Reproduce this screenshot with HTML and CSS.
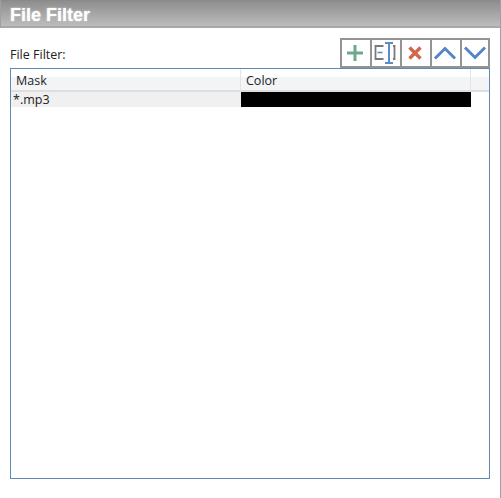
FILE: index.html
```html
<!DOCTYPE html>
<html lang="en">
<head>
    <meta charset="UTF-8">
    <title>File Filter</title>
    <link rel="stylesheet" href="styles.css">
</head>
<body>
    <div class="window">
        <h1 class="title">File Filter</h1>
        <div class="content">
            <div class="toolbar-row">
                <span class="filter-label">File Filter:</span>
                <div class="toolbar">
                    <button class="tool-btn" title="Add">
                        <svg width="20" height="20" viewBox="0 0 20 20"><path d="M10 2v16M2 10h16" stroke="#6fa68e" stroke-width="3" fill="none"/></svg>
                    </button>
                    <button class="tool-btn" title="Rename">
                        <svg width="26" height="26" viewBox="0 0 26 26">
                            <path d="M11.5 6H3.5v13h8M21 6h1.5v13H21" stroke="#7a7a7a" stroke-width="1.8" fill="none"/>
                            <path d="M5.5 12.5h5" stroke="#5b8bc9" stroke-width="1.6" fill="none"/>
                            <path d="M13 3h8M17 3v20M13 23h8" stroke="#5b8bc9" stroke-width="2" fill="none"/>
                        </svg>
                    </button>
                    <button class="tool-btn" title="Delete">
                        <svg width="20" height="20" viewBox="0 0 20 20"><path d="M4.5 4.5l11 11M15.5 4.5l-11 11" stroke="#d4674a" stroke-width="3.4" fill="none"/></svg>
                    </button>
                    <button class="tool-btn" title="Move up">
                        <svg width="24" height="20" viewBox="0 0 24 20"><path d="M2 15.5l10-10 10 10" stroke="#5585c9" stroke-width="3" fill="none"/></svg>
                    </button>
                    <button class="tool-btn" title="Move down">
                        <svg width="24" height="20" viewBox="0 0 24 20"><path d="M2 4.5l10 10 10-10" stroke="#5585c9" stroke-width="3" fill="none"/></svg>
                    </button>
                </div>
            </div>
            <div class="grid">
                <div class="grid-head">
                    <div class="head-cell">Mask</div>
                    <div class="head-cell">Color</div>
                    <div class="head-cell"></div>
                </div>
                <div class="grid-row">
                    <div class="mask-cell">*.mp3</div>
                    <div class="color-cell"></div>
                </div>
            </div>
        </div>
    </div>
</body>
</html>
```

FILE: styles.css
```css
html, body {
    margin: 0;
    padding: 0;
}

body {
    width: 501px;
    height: 498px;
    overflow: hidden;
    background-color: white;
    font-family: "Open Sans", Arial, sans-serif;
    font-size: 12.5px;
    color: #222;
}

.window {
    box-sizing: border-box;
    width: 501px;
    height: 498px;
    border-right: 1px solid #a0a0a0;
}

.title {
    box-sizing: border-box;
    height: 28px;
    margin: 0;
    padding-left: 9px;
    background: linear-gradient(#8e8e8e, #bcbcbc);
    border-top: 1px solid #8a8a8a;
    border-left: 1px solid #a0a0a0;
    border-bottom: 2px solid #a8a8a8;
    font-family: "Liberation Sans", Arial, sans-serif;
    font-size: 18px;
    line-height: 28px;
    font-weight: bold;
    color: white;
    text-shadow: 0 0 2px rgba(255, 255, 255, 0.7);
}

.content {
    padding: 10px 10px 0 10px;
}

.toolbar-row {
    display: flex;
    justify-content: space-between;
    align-items: center;
    height: 30px;
}

.filter-label {
    padding-top: 2px;
}

.toolbar {
    display: flex;
}

.tool-btn {
    display: flex;
    align-items: center;
    justify-content: center;
    box-sizing: border-box;
    width: 32px;
    height: 30px;
    margin: 0 -2px 0 0;
    padding: 0 2px 0 0;
    background-color: white;
    border: 2px solid #949494;
}

.tool-btn:last-child {
    width: 30px;
    margin-right: 0;
    padding-right: 0;
}

.grid {
    box-sizing: border-box;
    width: 480px;
    height: 411px;
    border: 1px solid #5f8ab5;
}

.grid-head {
    display: grid;
    grid-template-columns: 230px 230px 1fr;
    height: 23px;
    box-sizing: border-box;
    background: linear-gradient(white 40%, #f3f4f6 40%);
    border-bottom: 2px solid #dedede;
}

.head-cell {
    box-sizing: border-box;
    padding-left: 5px;
    line-height: 23px;
    border-right: 1px solid #e4e4e4;
}

.head-cell:last-child {
    border-right: none;
}

.grid-row {
    display: grid;
    grid-template-columns: 230px 230px;
    height: 15px;
}

.mask-cell {
    padding-left: 2px;
    line-height: 15px;
    background-color: #f0f0f0;
}

.color-cell {
    background-color: black;
}
```
